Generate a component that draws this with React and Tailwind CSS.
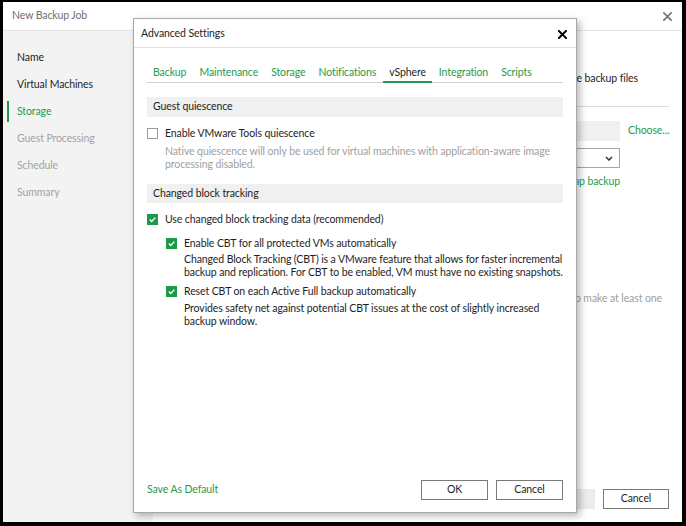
import React from "react";

const GREEN = "text-[#1f9a4c]";

function CloseX({ color = "#000", size = 10, w = 2 }) {
  return (
    <svg width={size} height={size} viewBox="0 0 10 10">
      <path d="M1 1 L9 9 M9 1 L1 9" stroke={color} strokeWidth={w} strokeLinecap="square" />
    </svg>
  );
}

function Check({ checked }) {
  if (!checked)
    return <div className="w-[11px] h-[11px] border border-[#9a9a9a] bg-white shrink-0" />;
  return (
    <div className="w-[11px] h-[11px] bg-[#1d9a48] shrink-0 flex items-center justify-center">
      <svg width="9" height="9" viewBox="0 0 9 9">
        <path d="M1.8 4.6 L3.7 6.5 L7.3 2.6" stroke="#fff" strokeWidth="1.4" fill="none" />
      </svg>
    </div>
  );
}

function Row({ checked, children }) {
  return (
    <div className="flex items-center h-[14px] gap-[7px]">
      <Check checked={checked} />
      <span className="leading-[14px] text-[#1e1e1e]">{children}</span>
    </div>
  );
}

function Section({ children, className = "" }) {
  return (
    <div className={"bg-[#f0f0f0] flex items-center pl-[6px] text-[#1e1e1e] " + className}>
      {children}
    </div>
  );
}

export default function App() {
  const tabs = ["Backup", "Maintenance", "Storage", "Notifications", "vSphere", "Integration", "Scripts"];
  const side = [
    ["Name", "text-[#1e1e1e]"],
    ["Virtual Machines", "text-[#1e1e1e]"],
    ["Storage", "text-[#1f9a4c]"],
    ["Guest Processing", "text-[#a3a3a3]"],
    ["Schedule", "text-[#a3a3a3]"],
    ["Summary", "text-[#a3a3a3]"],
  ];
  return (
    <div
      className="w-[686px] h-[526px] bg-black pt-[2px] pl-[3px] pr-[4px] pb-[4px] text-[10.5px] tracking-[-0.1px]"
      style={{ fontFamily: "Lato, 'Noto Sans', sans-serif" }}
    >
      <div className="relative w-full h-full bg-white flex flex-col">
        {/* window title */}
        <div className="h-[29px] border-b border-[#e3e3e3] flex items-center justify-between pl-[9px] pr-[10px] shrink-0">
          <span className="text-[#6e6e6e]">New Backup Job</span>
          <CloseX color="#7a7a7a" size={9} w={2} />
        </div>
        <div className="flex flex-1 min-h-0">
          {/* sidebar */}
          <div className="w-[150px] bg-[#f3f3f3] pt-[13px] flex flex-col">
            {side.map(([t, c]) => (
              <div key={t} className="h-[27px] flex items-center relative">
                {t === "Storage" && <div className="absolute left-[4px] top-[3px] w-[2px] h-[21px] bg-[#1f9a4c]" />}
                <span className={"pl-[14px] " + c}>{t}</span>
              </div>
            ))}
          </div>
          {/* main */}
          <div className="flex-1 flex flex-col pr-[13px] pl-[10px] pb-[13px]">
            <div className="mt-[40px] h-[14px] leading-[14px] flex justify-end pr-[31px] text-[#1e1e1e] whitespace-nowrap overflow-hidden">
              the backup files
            </div>
            <div className="mt-[21px] h-px bg-[#dcdcdc]" />
            <div className="mt-[14px] flex items-center h-[20px]">
              <div className="flex-1 h-[20px] bg-[#f0f0f0]" />
              <span className={"w-[41px] ml-[8px] whitespace-nowrap " + GREEN}>Choose...</span>
            </div>
            <div className="mt-[7px] flex items-center">
              <div className="flex-1 h-[20px] border border-[#a6a6a6] flex items-center justify-end pr-[6px]">
                <svg width="8" height="5" viewBox="0 0 8 5">
                  <path d="M1 1 L4 4 L7 1" stroke="#333" strokeWidth="1.5" fill="none" />
                </svg>
              </div>
              <div className="w-[49px]" />
            </div>
            <div className={"mt-[6px] h-[14px] leading-[14px] flex justify-end pr-[49px] " + GREEN}>Map backup</div>
            <div className="mt-[103px] h-[14px] leading-[14px] flex justify-end pr-[7px] text-[#a0a0a0] whitespace-nowrap">
              we recommend to make at least one
            </div>
            <div className="flex-1" />
            <div className="flex justify-end gap-[8px]">
              <div className="w-[90px] h-[20px] bg-[#ececec]" />
              <div className="w-[66px] h-[20px] border border-[#7a7a7a] flex items-center justify-center text-[#1e1e1e]">
                Cancel
              </div>
            </div>
          </div>
        </div>

        {/* Advanced settings dialog */}
        <div className="absolute left-[130px] top-[16px] w-[444px] h-[495px] bg-white border border-[#a8a8a8] shadow-[3px_3px_7px_rgba(0,0,0,0.28)] flex flex-col">
          <div className="h-[29px] border-b border-[#e3e3e3] flex items-center justify-between pt-[2px] pl-[7px] pr-[9px] shrink-0">
            <span className="text-[#1e1e1e]">Advanced Settings</span>
            <CloseX color="#000" size={9} w={2.2} />
          </div>
          <div className="flex-1 flex flex-col px-[13px] pb-[12px]">
            <div className="mt-[17px] flex gap-px border-b border-[#cfcfcf]">
              {tabs.map((t) => (
                <div
                  key={t}
                  className={
                    "px-[6px] leading-[14px] border-b-2 -mb-px " +
                    (t === "vSphere" ? "border-[#1f9a4c] text-[#1e1e1e]" : "border-transparent text-[#1f9a4c]")
                  }
                >
                  <div className="pb-[2px] whitespace-nowrap">{t}</div>
                </div>
              ))}
            </div>
            <Section className="mt-[14px] h-[20px]">Guest quiescence</Section>
            <div className="mt-[9px]">
              <Row checked={false}>Enable VMware Tools quiescence</Row>
            </div>
            <div className="mt-[5px] pl-[18px] leading-[13px] text-[#a0a0a0] whitespace-nowrap">
              Native quiescence will only be used for virtual machines with application-aware image
              <br />
              processing disabled.
            </div>
            <Section className="mt-[13px] h-[19px]">Changed block tracking</Section>
            <div className="mt-[9px]">
              <Row checked>Use changed block tracking data (recommended)</Row>
            </div>
            <div className="pl-[19px]">
              <div className="mt-[10px]">
                <Row checked>Enable CBT for all protected VMs automatically</Row>
              </div>
              <div className="mt-[3px] pl-[18px] leading-[13px] text-[#1e1e1e] whitespace-nowrap">
                Changed Block Tracking (CBT) is a VMware feature that allows for faster incremental
                <br />
                backup and replication. For CBT to be enabled, VM must have no existing snapshots.
              </div>
              <div className="mt-[5px]">
                <Row checked>Reset CBT on each Active Full backup automatically</Row>
              </div>
              <div className="mt-[4px] pl-[18px] leading-[13px] text-[#1e1e1e] whitespace-nowrap">
                Provides safety net against potential CBT issues at the cost of slightly increased
                <br />
                backup window.
              </div>
            </div>
            <div className="flex-1" />
            <div className="flex items-center">
              <span className={"flex-1 " + GREEN}>Save As Default</span>
              <div className="w-[67px] h-[20px] border border-[#7a7a7a] flex items-center justify-center text-[#1e1e1e]">
                OK
              </div>
              <div className="ml-[8px] w-[67px] h-[20px] border border-[#7a7a7a] flex items-center justify-center text-[#1e1e1e]">
                Cancel
              </div>
            </div>
          </div>
        </div>
      </div>
    </div>
  );
}
